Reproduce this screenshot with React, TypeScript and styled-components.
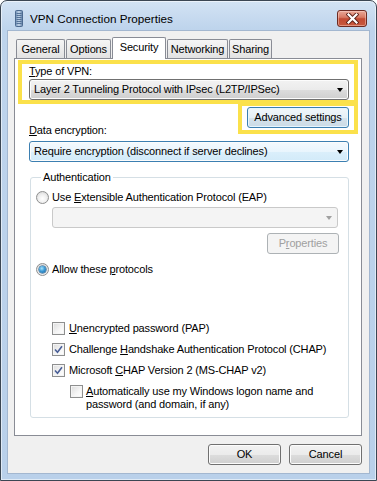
import React from 'react';
import styled, { createGlobalStyle, css } from 'styled-components';

const GlobalStyle = createGlobalStyle`
  html, body {
    margin: 0;
    padding: 0;
    background: #ffffff;
  }
  body {
    font-family: 'Liberation Sans', Arial, sans-serif;
    font-size: 11px;
    letter-spacing: -0.15px;
    color: #000;
  }
  * {
    box-sizing: border-box;
  }
`;

const Window = styled.div`
  width: 377px;
  height: 481px;
  border: 1px solid #3b4653;
  border-radius: 7px 7px 0 0;
  background: linear-gradient(180deg, #d3e3f4 0px, #bed4ec 28px, #b9d0ea 100%);
  padding: 0 6px 6px;
  display: flex;
  flex-direction: column;
  box-shadow: inset 0 0 0 1px rgba(255, 255, 255, 0.55);
`;

const TitleBar = styled.div`
  height: 29px;
  display: flex;
  align-items: center;
  padding: 5px 3px 0 8px;
`;

const TitleText = styled.span`
  font-size: 11.7px;
  letter-spacing: 0;
  line-height: 15px;
  color: #000;
  margin-left: 7px;
`;

const CloseButton = styled.div`
  margin-left: auto;
  width: 30px;
  height: 17px;
  border: 1px solid #6d2b22;
  border-radius: 3px;
  background: linear-gradient(180deg, #e9a898 0%, #d97a64 42%, #c24a33 52%, #c85a3f 100%);
  box-shadow: inset 0 0 0 1px rgba(255, 220, 210, 0.45);
  display: flex;
  align-items: center;
  justify-content: center;
`;

const Client = styled.div`
  flex: 1;
  background: #f0f0f0;
  border: 1px solid #a3b7d0;
  padding: 6px 7px 8px 6px;
  display: flex;
  flex-direction: column;
`;

const TabRow = styled.div`
  height: 21px;
  display: flex;
  align-items: flex-end;
  gap: 1px;
  padding-left: 2px;
  position: relative;
  z-index: 1;
`;

const Tab = styled.div<{ $active?: boolean; $w: number }>`
  width: ${p => p.$w}px;
  height: 19px;
  border: 1px solid #898c95;
  border-bottom: none;
  border-radius: 2px 2px 0 0;
  background: linear-gradient(180deg, #f5f5f5 0%, #ececec 50%, #e2e2e2 100%);
  display: flex;
  align-items: center;
  justify-content: center;
  line-height: 15px;
  white-space: nowrap;
  ${p =>
    p.$active &&
    css`
      height: 22px;
      margin-bottom: -1px;
      background: #ffffff;
      padding-bottom: 2px;
    `}
`;

const Panel = styled.div`
  flex: 1;
  background: #ffffff;
  border: 1px solid #898c95;
  padding: 1px 3px 0;
  display: flex;
  flex-direction: column;
`;

const Highlight = styled.div`
  border: 4px solid #fbe14b;
`;

const TypeBox = styled(Highlight)`
  padding: 0 4px 0 7px;
`;

const AdvancedBox = styled(Highlight)`
  padding: 1px 5px 2px 5px;
  margin-bottom: 7px;
`;

const MidRow = styled.div`
  margin-top: -2px;
  display: flex;
  justify-content: space-between;
  align-items: flex-end;
`;

const Label = styled.div<{ $indent?: number; $drop?: number }>`
  line-height: 15px;
  height: 15px;
  margin-left: ${p => p.$indent ?? 0}px;
  margin-bottom: ${p => p.$drop ?? 0}px;
`;

const Key = styled.span`
  text-decoration: underline;
`;

const Combo = styled.div<{ $w: number; $indent?: number; $state?: 'normal' | 'focus' | 'disabled' }>`
  width: ${p => p.$w}px;
  height: 21px;
  margin-left: ${p => p.$indent ?? 0}px;
  border: 1px solid #707070;
  border-radius: 3px;
  background: linear-gradient(180deg, #f2f2f2 0%, #ebebeb 50%, #dddddd 50%, #cfcfcf 100%);
  box-shadow: inset 0 0 0 1px #fcfcfc;
  display: flex;
  align-items: center;
  padding: 0 5px 0 4px;
  line-height: 15px;
  ${p =>
    p.$state === 'focus' &&
    css`
      border-color: #3c7fb1;
      background: linear-gradient(180deg, #f4fafe 0%, #e9f5fd 50%, #dbeffb 50%, #d2eaf9 100%);
    `}
  ${p =>
    p.$state === 'disabled' &&
    css`
      border-color: #c9c9c9;
      background: #f4f4f4;
      box-shadow: none;
    `}
`;

const ComboText = styled.span`
  flex: 1;
  white-space: nowrap;
`;

const Arrow = styled.span<{ $disabled?: boolean }>`
  width: 0;
  height: 0;
  border-left: 3.5px solid transparent;
  border-right: 3.5px solid transparent;
  border-top: 4px solid ${p => (p.$disabled ? '#a0a0a0' : '#000')};
`;

const Button = styled.div<{ $w: number; $state?: 'normal' | 'focus' | 'disabled'; $right?: number }>`
  width: ${p => p.$w}px;
  height: 21px;
  margin-right: ${p => p.$right ?? 0}px;
  border: 1px solid #707070;
  border-radius: 3px;
  background: linear-gradient(180deg, #f2f2f2 0%, #ebebeb 50%, #dddddd 50%, #cfcfcf 100%);
  box-shadow: inset 0 0 0 1px #fcfcfc;
  display: flex;
  align-items: center;
  justify-content: center;
  line-height: 15px;
  white-space: nowrap;
  ${p =>
    p.$state === 'focus' &&
    css`
      border-color: #3c7fb1;
      background: linear-gradient(180deg, #f1f7fb 0%, #e6eff5 50%, #d6e3ec 50%, #cbdbe6 100%);
      box-shadow: inset 0 0 0 1px #e8f6fd;
    `}
  ${p =>
    p.$state === 'disabled' &&
    css`
      border-color: #adb2b5;
      background: #f4f4f4;
      box-shadow: none;
      color: #a0a0a0;
    `}
`;

const GroupBox = styled.fieldset`
  margin: 8px 0 0 12px;
  width: 319px;
  border: 1px solid #d5dfe5;
  border-radius: 3px;
  padding: 0 0 6px 5px;
  display: flex;
  flex-direction: column;
`;

const Legend = styled.legend`
  margin-left: 5px;
  padding: 0 2px;
  line-height: 15px;
`;

const OptionRow = styled.div<{ $top: number; $indent?: number; $gap?: number }>`
  display: flex;
  align-items: center;
  margin-top: ${p => p.$top}px;
  margin-left: ${p => p.$indent ?? 0}px;
  gap: ${p => p.$gap ?? 3}px;
  line-height: 15px;
  white-space: nowrap;
`;

const WrapRow = styled(OptionRow)`
  align-items: flex-start;
  line-height: 13px;
`;

const Radio = styled.span<{ $on?: boolean }>`
  width: 13px;
  height: 13px;
  border-radius: 50%;
  border: 1px solid #8e8f8f;
  background: radial-gradient(circle at 50% 60%, #ffffff 0%, #f0f0f0 45%, #cfcfcf 100%);
  display: flex;
  align-items: center;
  justify-content: center;
  flex: none;
  ${p =>
    p.$on &&
    css`
      &::after {
        content: '';
        width: 7px;
        height: 7px;
        border-radius: 50%;
        background: radial-gradient(circle at 40% 35%, #a8e4fb 0%, #3d9ad6 45%, #135d96 100%);
        box-shadow: 0 0 0 0.5px #0f4a7a;
      }
    `}
`;

const Check = styled.span`
  width: 13px;
  height: 13px;
  border: 1px solid #8e8f8f;
  background: linear-gradient(135deg, #dcdcdc 0%, #f6f6f6 60%, #ffffff 100%);
  box-shadow: inset 0 0 0 1px #f4f4f4;
  display: flex;
  align-items: center;
  justify-content: center;
  flex: none;
`;

const Spacer = styled.div`
  flex: 1;
`;

const Footer = styled.div`
  margin-top: 8px;
  display: flex;
  justify-content: flex-end;
  gap: 8px;
`;

function TitleIcon() {
  return (
    <svg width="8" height="17" viewBox="0 0 8 17">
      <defs>
        <linearGradient id="ti" x1="0" x2="1" y1="0" y2="0">
          <stop offset="0" stopColor="#6f8fb5" />
          <stop offset="0.5" stopColor="#c4d6ea" />
          <stop offset="1" stopColor="#5c7ca3" />
        </linearGradient>
      </defs>
      <rect x="0.5" y="0.5" width="7" height="16" rx="1" fill="url(#ti)" stroke="#4c6a90" />
      {[3, 5, 7, 9, 11, 13].map(y => (
        <line key={y} x1="1.5" x2="6.5" y1={y + 0.5} y2={y + 0.5} stroke="#3f5f88" strokeWidth="0.8" />
      ))}
    </svg>
  );
}

function CloseGlyph() {
  return (
    <svg width="13" height="11" viewBox="0 0 13 11">
      <path d="M2.5 1.5 L10.5 9.5 M10.5 1.5 L2.5 9.5" stroke="#5a2018" strokeWidth="4" strokeLinecap="square" />
      <path d="M2.5 1.5 L10.5 9.5 M10.5 1.5 L2.5 9.5" stroke="#ffffff" strokeWidth="2.2" strokeLinecap="square" />
    </svg>
  );
}

function CheckMark() {
  return (
    <svg width="9" height="9" viewBox="0 0 9 9">
      <path d="M1 4.5 L3.5 7.2 L8 1.2" fill="none" stroke="#4a5f97" strokeWidth="1.6" />
    </svg>
  );
}

export default function App() {
  return (
    <>
      <GlobalStyle />
      <Window>
        <TitleBar>
          <TitleIcon />
          <TitleText>VPN Connection Properties</TitleText>
          <CloseButton>
            <CloseGlyph />
          </CloseButton>
        </TitleBar>
        <Client>
          <TabRow>
            <Tab $w={49}>General</Tab>
            <Tab $w={45}>Options</Tab>
            <Tab $w={54} $active>
              Security
            </Tab>
            <Tab $w={61}>Networking</Tab>
            <Tab $w={43}>Sharing</Tab>
          </TabRow>
          <Panel>
            <TypeBox>
              <Label>
                <Key>T</Key>ype of VPN:
              </Label>
              <Combo $w={320}>
                <ComboText>Layer 2 Tunneling Protocol with IPsec (L2TP/IPSec)</ComboText>
                <Arrow />
              </Combo>
            </TypeBox>
            <MidRow>
              <Label $indent={11} $drop={3}>
                <Key>D</Key>ata encryption:
              </Label>
              <AdvancedBox>
                <Button $w={102} $state="focus">
                  Advanced settings
                </Button>
              </AdvancedBox>
            </MidRow>
            <Combo $w={320} $indent={11} $state="focus">
              <ComboText>Require encryption (disconnect if server declines)</ComboText>
              <Arrow />
            </Combo>
            <GroupBox>
              <Legend>Authentication</Legend>
              <OptionRow $top={5}>
                <Radio />
                <span>
                  Use <Key>E</Key>xtensible Authentication Protocol (EAP)
                </span>
              </OptionRow>
              <OptionRow $top={2} $indent={16}>
                <Combo $w={286} $state="disabled">
                  <ComboText />
                  <Arrow $disabled />
                </Combo>
              </OptionRow>
              <OptionRow $top={5}>
                <Spacer />
                <Button $w={72} $state="disabled" $right={9}>
                  P<Key>r</Key>operties
                </Button>
              </OptionRow>
              <OptionRow $top={8}>
                <Radio $on />
                <span>
                  Allow these <Key>p</Key>rotocols
                </span>
              </OptionRow>
              <OptionRow $top={44} $indent={16} $gap={4}>
                <Check />
                <span>
                  <Key>U</Key>nencrypted password (PAP)
                </span>
              </OptionRow>
              <OptionRow $top={6} $indent={16} $gap={4}>
                <Check>
                  <CheckMark />
                </Check>
                <span>
                  Challenge <Key>H</Key>andshake Authentication Protocol (CHAP)
                </span>
              </OptionRow>
              <OptionRow $top={6} $indent={16} $gap={4}>
                <Check>
                  <CheckMark />
                </Check>
                <span>
                  Microsoft <Key>C</Key>HAP Version 2 (MS-CHAP v2)
                </span>
              </OptionRow>
              <WrapRow $top={7} $indent={34} $gap={3}>
                <Check />
                <span>
                  <Key>A</Key>utomatically use my Windows logon name and
                  <br />
                  password (and domain, if any)
                </span>
              </WrapRow>
            </GroupBox>
          </Panel>
          <Footer>
            <Button $w={73}>OK</Button>
            <Button $w={73}>Cancel</Button>
          </Footer>
        </Client>
      </Window>
    </>
  );
}
